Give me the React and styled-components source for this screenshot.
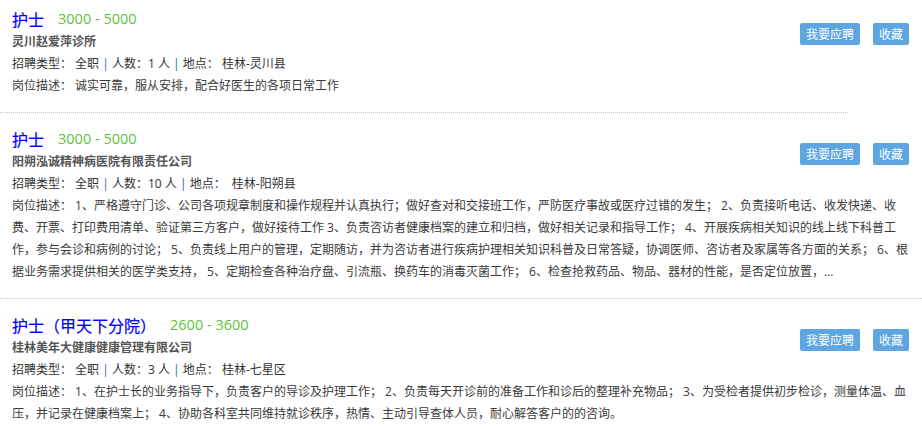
import React from 'react';
import styled, { createGlobalStyle } from 'styled-components';

const GlobalStyle = createGlobalStyle`
   html, body {
      margin: 0;
      padding: 0;
      background: #fff;
   }
   body {
      font-family: "Open Sans", "Noto Sans CJK SC", sans-serif;
      font-size: 12px;
      color: #333;
   }
`;

const List = styled.div`
   width: 922px;
`;

const Item = styled.div`
   padding: ${props => (props.$first ? '7px' : '14px')} 12px 15px 12px;
`;

const Header = styled.div`
   display: flex;
   justify-content: space-between;
   align-items: flex-start;
`;

const Info = styled.div`
   display: flex;
   flex-direction: column;
`;

const TitleRow = styled.div`
   display: flex;
   align-items: center;
   height: 24px;
   line-height: 24px;
`;

const JobName = styled.span`
   font-size: 16px;
   color: #0000f5;
   font-family: "Noto Sans CJK SC", sans-serif;
   -webkit-text-stroke: 0.2px #0000f5;
`;

const Salary = styled.span`
   margin-left: 14px;
   font-size: 14.5px;
   color: #63bf3a;
`;

const Company = styled.div`
   line-height: 22px;
   font-weight: bold;
   color: #555;
`;

const Meta = styled.div`
   line-height: 22px;
   color: #333;
   white-space: pre;
`;

const Bar = styled.span`
   color: #2f65a8;
`;

const Actions = styled.div`
   display: flex;
   gap: 13px;
   margin-top: 16px;
   margin-right: 1px;
`;

const Button = styled.div`
   height: 22px;
   line-height: 22px;
   padding: 0 6px;
   border-radius: 2px;
   background: #5ea6e2;
   color: #fff;
   font-size: 12px;
   font-family: "Noto Sans CJK SC", sans-serif;
   cursor: pointer;
`;

const Desc = styled.div`
   line-height: 22px;
   color: #3a3a3a;
`;

const Divider = styled.div`
   width: ${props => props.$width || '100%'};
   border-top: 1px dotted #c8c8c8;
`;

const jobs = [
   {
      name: '护士',
      salary: '3000 - 5000',
      company: '灵川赵爱萍诊所',
      count: '1',
      place: '桂林-灵川县',
      desc: '诚实可靠，服从安排，配合好医生的各项日常工作',
      divider: '848px',
   },
   {
      name: '护士',
      salary: '3000 - 5000',
      company: '阳朔泓诚精神病医院有限责任公司',
      count: '10',
      place: ' 桂林-阳朔县',
      desc:
         '1、严格遵守门诊、公司各项规章制度和操作规程并认真执行；做好查对和交接班工作，严防医疗事故或医疗过错的发生； 2、负责接听电话、收发快递、收费、开票、打印费用清单、验证第三方客户，做好接待工作 3、负责咨访者健康档案的建立和归档，做好相关记录和指导工作； 4、开展疾病相关知识的线上线下科普工作，参与会诊和病例的讨论； 5、负责线上用户的管理，定期随访，并为咨访者进行疾病护理相关知识科普及日常答疑，协调医师、咨访者及家属等各方面的关系； 6、根据业务需求提供相关的医学类支持， 5、定期检查各种治疗盘、引流瓶、换药车的消毒灭菌工作； 6、检查抢救药品、物品、器材的性能，是否定位放置，...',
   },
   {
      name: '护士（甲天下分院）',
      salary: '2600 - 3600',
      company: '桂林美年大健康健康管理有限公司',
      count: '3',
      place: '桂林-七星区',
      desc:
         '1、在护士长的业务指导下，负责客户的导诊及护理工作； 2、负责每天开诊前的准备工作和诊后的整理补充物品； 3、为受检者提供初步检诊，测量体温、血压，并记录在健康档案上； 4、协助各科室共同维持就诊秩序，热情、主动引导查体人员，耐心解答客户的的咨询。',
   },
];

const App = () => (
   <List>
      <GlobalStyle />
      {jobs.map((job, index) => (
         <React.Fragment key={`job-${index}`}>
            <Item $first={index === 0}>
               <Header>
                  <Info>
                     <TitleRow>
                        <JobName>{job.name}</JobName>
                        <Salary>{job.salary}</Salary>
                     </TitleRow>
                     <Company>{job.company}</Company>
                     <Meta>
                        {'招聘类型： 全职 '}
                        <Bar>|</Bar>
                        {` 人数：${job.count} 人 `}
                        <Bar>|</Bar>
                        {` 地点： ${job.place}`}
                     </Meta>
                  </Info>
                  <Actions>
                     <Button>我要应聘</Button>
                     <Button>收藏</Button>
                  </Actions>
               </Header>
               <Desc>{`岗位描述： ${job.desc}`}</Desc>
            </Item>
            {index < jobs.length - 1 && <Divider $width={job.divider} />}
         </React.Fragment>
      ))}
   </List>
);

export default App;
